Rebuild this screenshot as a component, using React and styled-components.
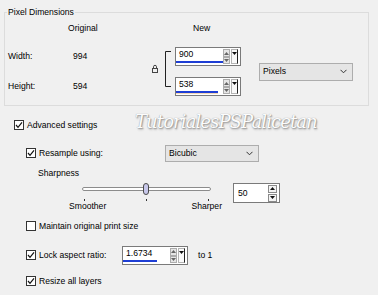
import React from 'react'
import styled, { createGlobalStyle } from 'styled-components'

const GlobalStyle = createGlobalStyle`
  html, body {
    margin: 0;
    padding: 0;
    background: #f0f0f0;
  }
  body {
    font-family: "Liberation Sans", Arial, sans-serif;
    font-size: 8.6px;
    color: #000;
  }
`

const Dialog = styled.div`
  position: relative;
  width: 378px;
  height: 295px;
  overflow: hidden;
  background: #f0f0f0;
  line-height: 11px;
`

const Group = styled.fieldset`
  margin: 7px 9px 0 4px;
  padding: 4px 0 9px 3px;
  border: 1px solid #dcdcdc;
  min-width: 0;
`

const Legend = styled.legend`
  padding: 0 1px;
  margin-left: -1px;
  line-height: 11px;
`

const Columns = styled.div`
  display: grid;
  grid-template-columns: 60px 80px 27px 66px 18px 94px;
`

const Header = styled(Columns)`
  height: 12px;
  align-items: center;
  margin-bottom: 13px;
`

const Body = styled(Columns)`
  grid-template-rows: 19px 19px;
  row-gap: 11px;
  align-items: center;
`

const Cell = styled.div`
  grid-column: ${p => p.$col};
  padding-left: ${p => p.$pad || 0}px;
`

const Bracket = styled.svg`
  grid-column: 3;
  grid-row: 1 / span 2;
  align-self: start;
`

const Select = styled.div`
  grid-column: ${p => p.$col || 'auto'};
  grid-row: ${p => p.$row || 'auto'};
  align-self: center;
  display: flex;
  align-items: center;
  justify-content: space-between;
  box-sizing: border-box;
  width: ${p => p.$w}px;
  height: ${p => p.$h}px;
  padding: 0 5px 0 3px;
  background: #e5e5e5;
  border: 1px solid #adadad;
`

const SpinBox = styled.div`
  display: flex;
  align-items: center;
  box-sizing: border-box;
  width: ${p => p.$w}px;
  height: ${p => p.$h}px;
  background: #fff;
  border: 1px solid #7a7a7a;
  padding-right: 2px;
`

const SpinField = styled.div`
  flex: 1;
  align-self: stretch;
  display: flex;
  flex-direction: column;
  padding-top: ${p => p.$top}px;
`

const SpinValue = styled.span`
  padding-left: ${p => p.$pad}px;
  line-height: 11px;
`

const Underline = styled.span`
  display: block;
  width: ${p => p.$w}px;
  height: 2px;
  margin-top: 1px;
  background: #1e3ed4;
  box-shadow: 0 1px 0 ${p => (p.$glow ? '#f3d6b4' : 'transparent')};
`

const Stepper = styled.div`
  display: flex;
  flex-direction: column;
  width: ${p => p.$w}px;
  gap: ${p => p.$gap}px;
`

const Step = styled.div`
  display: flex;
  align-items: center;
  justify-content: center;
  box-sizing: border-box;
  height: ${p => p.$h}px;
  background: ${p => (p.$dark ? '#f4f4f4' : '#e6e6e6')};
  border: 1px solid ${p => (p.$dark ? '#8a8a8a' : '#acacac')};
`

const Drop = styled.div`
  display: flex;
  justify-content: center;
  box-sizing: border-box;
  width: 7px;
  height: 15px;
  margin-left: 1px;
  padding-top: 2px;
  background: #fafafa;
  border: 1px solid #b4b4b4;
  border-right-color: #222;
`

const Options = styled.div`
  display: flex;
  flex-direction: column;
`

const Row = styled.div`
  display: flex;
  align-items: ${p => p.$align || 'center'};
  height: ${p => (p.$h ? `${p.$h}px` : 'auto')};
  margin-top: ${p => p.$mt}px;
  padding-left: ${p => p.$indent}px;
`

const Box = styled.span`
  display: inline-flex;
  align-items: center;
  justify-content: center;
  flex: none;
  box-sizing: border-box;
  width: 10px;
  height: 10px;
  margin-right: 3px;
  background: #fff;
  border: 1px solid #333;
`

const Label = styled.span`
  width: ${p => (p.$w ? `${p.$w}px` : 'auto')};
  flex: none;
`

const Slider = styled.div`
  position: relative;
  width: 129px;
  padding-top: 4px;
`

const Track = styled.div`
  box-sizing: border-box;
  height: 4px;
  background: #fff;
  border: 1px solid #8c8c8c;
  border-radius: 2px;
`

const Thumb = styled.div`
  position: absolute;
  left: 61px;
  top: 0;
  box-sizing: border-box;
  width: 6px;
  height: 12px;
  background: #c7c7ea;
  border: 1px solid #4a4a4a;
  border-radius: 3px;
`

const Ticks = styled.div`
  display: flex;
  justify-content: space-between;
  height: 2px;
  margin-top: 8px;
  padding: 0 2px;
`

const Tick = styled.span`
  width: 1px;
  background: #333;
`

const Ends = styled.div`
  display: flex;
  justify-content: space-between;
  margin: 0 -11px 0 -13px;
`

const After = styled.span`
  margin-left: ${p => p.$gap}px;
`

const Watermark = styled.div`
  position: absolute;
  left: 135px;
  top: 109px;
  font-family: "DejaVu Serif", "Liberation Serif", serif;
  font-style: italic;
  font-weight: 300;
  font-size: 18px;
  line-height: 26px;
  letter-spacing: -0.9px;
  color: #fcfcfc;
  text-shadow: 0 0 1px #8a8a8a, 1px 1px 1px #a8a8a8, 1px 2px 2px #c4c4c4;
  pointer-events: none;
`

const Chevron = () => (
  <svg width="7" height="5" viewBox="0 0 7 5">
    <polyline points="0.5,0.8 3.5,3.8 6.5,0.8" fill="none" stroke="#333" strokeWidth="1" />
  </svg>
)

const Arrow = ({ up, color = '#666' }) => (
  <svg width="5" height="3" viewBox="0 0 5 3">
    <polygon points={up ? '0,3 5,3 2.5,0' : '0,0 5,0 2.5,3'} fill={color} />
  </svg>
)

const Check = ({ checked }) => (
  <Box>
    {checked && (
      <svg width="8" height="8" viewBox="0 0 8 8">
        <polyline points="1,4 3,6.3 7,1.3" fill="none" stroke="#111" strokeWidth="1.2" />
      </svg>
    )}
  </Box>
)

const SizeSpin = ({ value, line, glow, w = 66 }) => (
  <SpinBox $w={w} $h={19}>
    <SpinField $top={1}>
      <SpinValue $pad={3}>{value}</SpinValue>
      <Underline $w={line} $glow={glow} />
    </SpinField>
    <Stepper $w={7} $gap={0}>
      <Step $h={8}><Arrow up /></Step>
      <Step $h={7}><Arrow /></Step>
    </Stepper>
    <Drop><Arrow color="#111" /></Drop>
  </SpinBox>
)

export default function App() {
  return (
    <>
      <GlobalStyle />
      <Dialog>
        <Group>
          <Legend>Pixel Dimensions</Legend>
          <Header>
            <Cell $col={2}>Original</Cell>
            <Cell $col={4} $pad={18}>New</Cell>
          </Header>
          <Body>
            <Cell $col={1}>Width:</Cell>
            <Cell $col={2} $pad={5}>994</Cell>
            <Bracket width="27" height="49" viewBox="0 0 27 49">
              <path d="M23 4.5H17.5V39.5H23" fill="none" stroke="#222" strokeWidth="1" />
              <path d="M5.5 21.5V19.8a1.5 1.5 0 0 1 3 0V21.5" fill="none" stroke="#444" strokeWidth="1" />
              <rect x="4.5" y="21.5" width="5" height="4" fill="none" stroke="#444" strokeWidth="1" />
            </Bracket>
            <Cell $col={4}>
              <SizeSpin value="900" line={47} />
            </Cell>
            <Select $col={6} $row="1 / span 2" $w={94} $h={18}>
              <span>Pixels</span>
              <Chevron />
            </Select>
            <Cell $col={1}>Height:</Cell>
            <Cell $col={2} $pad={5}>594</Cell>
            <Cell $col={4}>
              <SizeSpin value="538" line={42} glow />
            </Cell>
          </Body>
        </Group>

        <Options>
          <Row $mt={9} $h={20} $indent={14}>
            <Check checked />
            <Label>Advanced settings</Label>
          </Row>
          <Row $mt={8} $h={20} $indent={26}>
            <Check checked />
            <Label $w={126}>Resample using:</Label>
            <Select $w={94} $h={17}>
              <span>Bicubic</span>
              <Chevron />
            </Select>
          </Row>
          <Row $mt={4} $h={12} $indent={38}>
            <Label>Sharpness</Label>
          </Row>
          <Row $mt={4} $indent={82} $align="flex-start">
            <Slider>
              <Track />
              <Thumb />
              <Ticks>
                <Tick />
                <Tick />
                <Tick />
              </Ticks>
              <Ends>
                <span>Smoother</span>
                <span>Sharper</span>
              </Ends>
            </Slider>
            <After $gap={22}>
              <SpinBox $w={47} $h={20}>
                <SpinField $top={4}>
                  <SpinValue $pad={4}>50</SpinValue>
                </SpinField>
                <Stepper $w={9} $gap={1}>
                  <Step $h={8} $dark><Arrow up color="#111" /></Step>
                  <Step $h={8} $dark><Arrow color="#111" /></Step>
                </Stepper>
              </SpinBox>
            </After>
          </Row>
          <Row $mt={4} $h={20} $indent={26}>
            <Check />
            <Label>Maintain original print size</Label>
          </Row>
          <Row $mt={9} $h={20} $indent={26}>
            <Check checked />
            <Label $w={83}>Lock aspect ratio:</Label>
            <SizeSpin value="1.6734" line={34} />
            <After $gap={10}>to 1</After>
          </Row>
          <Row $mt={6} $h={20} $indent={26}>
            <Check checked />
            <Label>Resize all layers</Label>
          </Row>
        </Options>

        <Watermark>TutorialesPSPalicetan</Watermark>
      </Dialog>
    </>
  )
}
